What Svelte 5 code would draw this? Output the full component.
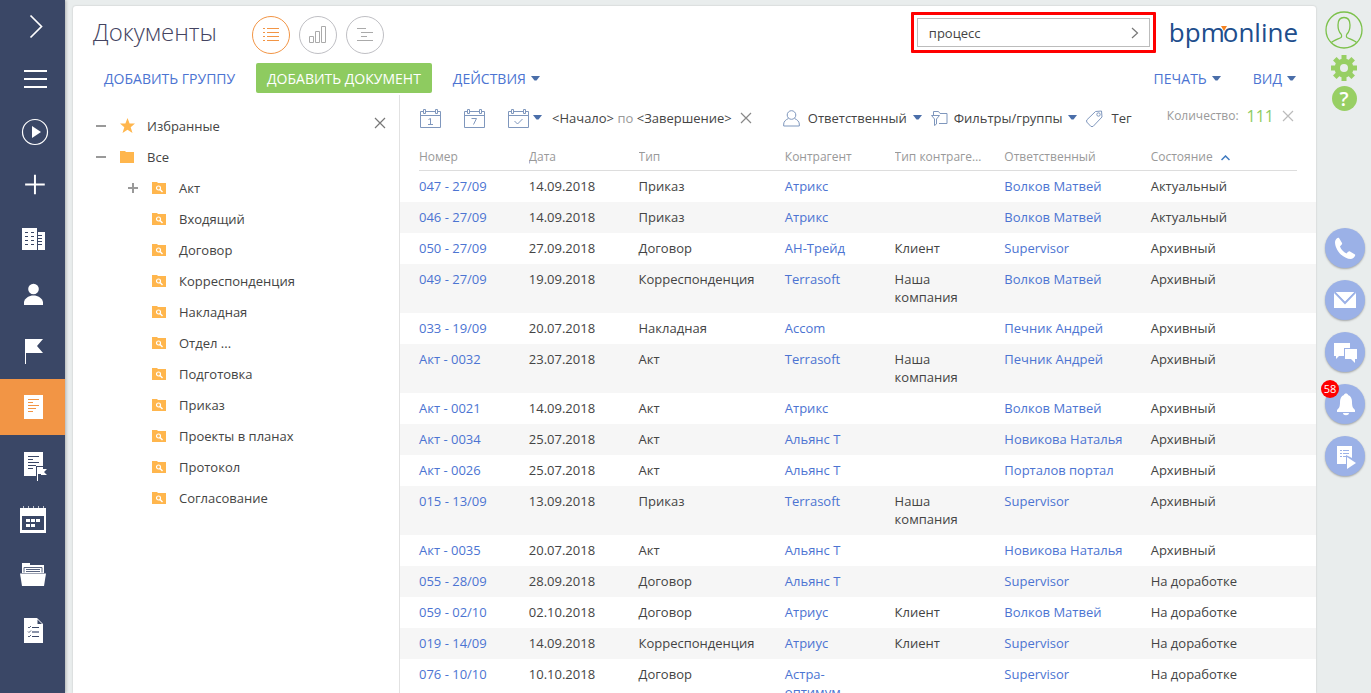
<script lang="ts">
	type Doc = {
		num: string;
		date: string;
		type: string;
		account: string;
		accountType: string;
		owner: string;
		state: string;
	};

	const folders = [
		'Акт',
		'Входящий',
		'Договор',
		'Корреспонденция',
		'Накладная',
		'Отдел ...',
		'Подготовка',
		'Приказ',
		'Проекты в планах',
		'Протокол',
		'Согласование'
	];

	const columns = ['Номер', 'Дата', 'Тип', 'Контрагент', 'Тип контрагента', 'Ответственный', 'Состояние'];

	const rows: string[][] = [
		['047 - 27/09', '14.09.2018', 'Приказ', 'Атрикс', '', 'Волков Матвей', 'Актуальный'],
		['046 - 27/09', '14.09.2018', 'Приказ', 'Атрикс', '', 'Волков Матвей', 'Актуальный'],
		['050 - 27/09', '27.09.2018', 'Договор', 'АН-Трейд', 'Клиент', 'Supervisor', 'Архивный'],
		['049 - 27/09', '19.09.2018', 'Корреспонденция', 'Terrasoft', 'Наша компания', 'Волков Матвей', 'Архивный'],
		['033 - 19/09', '20.07.2018', 'Накладная', 'Accom', '', 'Печник Андрей', 'Архивный'],
		['Акт - 0032', '23.07.2018', 'Акт', 'Terrasoft', 'Наша компания', 'Печник Андрей', 'Архивный'],
		['Акт - 0021', '14.09.2018', 'Акт', 'Атрикс', '', 'Волков Матвей', 'Архивный'],
		['Акт - 0034', '25.07.2018', 'Акт', 'Альянс Т', '', 'Новикова Наталья', 'Архивный'],
		['Акт - 0026', '25.07.2018', 'Акт', 'Альянс Т', '', 'Порталов портал', 'Архивный'],
		['015 - 13/09', '13.09.2018', 'Приказ', 'Terrasoft', 'Наша компания', 'Supervisor', 'Архивный'],
		['Акт - 0035', '20.07.2018', 'Акт', 'Альянс Т', '', 'Новикова Наталья', 'Архивный'],
		['055 - 28/09', '28.09.2018', 'Договор', 'Альянс Т', '', 'Supervisor', 'На доработке'],
		['059 - 02/10', '02.10.2018', 'Договор', 'Атриус', 'Клиент', 'Волков Матвей', 'На доработке'],
		['019 - 14/09', '14.09.2018', 'Корреспонденция', 'Атриус', 'Клиент', 'Supervisor', 'На доработке'],
		['076 - 10/10', '10.10.2018', 'Договор', 'Астра-оптимум', '', 'Supervisor', 'На доработке']
	];

	const docs: Doc[] = rows.map(([num, date, type, account, accountType, owner, state]) => ({
		num,
		date,
		type,
		account,
		accountType,
		owner,
		state
	}));

	let search = $state('процесс');
</script>

{#snippet caret()}
	<svg class="caret" width="9" height="5" viewBox="0 0 9 5"><path d="M0 0h9L5.500 4.500h-2z" fill="#4a6ea9" /></svg>
{/snippet}

{#snippet cross()}
	<svg width="12" height="12" viewBox="0 0 12 12"><path d="M1 1l10 10M11 1L1 11" fill="none" stroke="currentColor" stroke-width="1.2" /></svg>
{/snippet}

{#snippet calendar()}
	<path d="M.5 3.500h2.500M6 3.500h9M18 3.500h2.500v16H.5v-16M.5 7.500h20M3.500 1.500h2v4h-2zM15.500 1.500h2v4h-2z" />
{/snippet}

<div class="app">
	<nav class="rail" aria-label="Разделы">
		<button class="short" aria-label="Развернуть">
			<svg viewBox="0 0 65 53"><path d="M30.500 15.500l11 11-11 11" fill="none" stroke="#fff" stroke-width="1.700" /></svg>
		</button>
		<button class="short" aria-label="Меню">
			<svg viewBox="0 0 65 53"><path d="M24 17h23v2H24zM24 25h23v2H24zM24 33h23v2H24z" fill="#fff" /></svg>
		</button>
		<button class="short" aria-label="Запустить процесс">
			<svg viewBox="0 0 65 53">
				<circle cx="35" cy="26" r="12.500" fill="none" stroke="#fff" stroke-width="1.200" />
				<path d="M32 20l9 6-9 6z" fill="#fff" />
			</svg>
		</button>
		<button class="short" aria-label="Добавить">
			<svg viewBox="0 0 65 53"><path d="M34 16h2v20h-2zM25 25h20v2H25z" fill="#fff" /></svg>
		</button>
		<button aria-label="Контрагенты">
			<svg viewBox="0 0 65 56">
				<path d="M22 17h15v22H22zM38 21h7v18h-7z" fill="#fff" />
				<path d="M25 21h3v1h-3zM31 21h3v1h-3zM25 25h3v1h-3zM31 25h3v1h-3zM25 29h3v1h-3zM31 29h3v1h-3zM25 33h3v1h-3zM31 33h3v1h-3zM38 24h4v1h-4zM38 27h4v1h-4zM38 30h4v1h-4zM38 33h4v1h-4z" fill="#3a4766" />
			</svg>
		</button>
		<button aria-label="Контакты">
			<svg viewBox="0 0 65 56">
				<circle cx="33.500" cy="22" r="5.300" fill="#fff" />
				<path d="M24 38v-3c1-4 5-6.500 9.500-6.500S42 31 43 35v3z" fill="#fff" />
			</svg>
		</button>
		<button aria-label="Активности">
			<svg viewBox="0 0 65 56"><path d="M25 16h18l-6 7 6 7H26v11h-1z" fill="#fff" /></svg>
		</button>
		<button class="active" aria-label="Документы">
			<svg viewBox="0 0 65 56">
				<path d="M24 16h19v24H24z" fill="#fff" />
				<path d="M28 20h11v1H28zM28 23h5v1h-5zM28 26h11v1H28zM28 29h8v1h-8zM28 32h5v1h-5z" fill="#f29545" />
			</svg>
		</button>
		<button aria-label="Договоры">
			<svg viewBox="0 0 65 56">
				<path d="M24 17h19v14h-7v10H24z" fill="#fff" />
				<path d="M28 21h11v1H28zM28 24h5v1h-5zM28 27h11v1H28zM28 30h8v1h-8zM28 33h5v1h-5z" fill="#3a4766" />
				<path d="M37 32h6v2h4l-3 3 3 3h-6v-1h-3v7h-1z" fill="#fff" />
			</svg>
		</button>
		<button aria-label="Календарь">
			<svg viewBox="0 0 65 56">
				<path d="M20 17h26v25H20z" fill="#fff" />
				<path d="M23 15h1v2h-1zM28 15h1v2h-1zM33 15h1v2h-1zM38 15h1v2h-1zM43 15h1v2h-1z" fill="#c4c8d1" />
				<path d="M22 25h22v14H22z" fill="#3a4766" />
				<path d="M26 28h4v3h-4zM31 28h4v3h-4zM36 28h4v3h-4zM26 33h4v3h-4zM31 33h4v3h-4z" fill="#fff" />
			</svg>
		</button>
		<button aria-label="Проекты">
			<svg viewBox="0 0 65 56">
				<path d="M22 16h8v2h14v8H22z" fill="#fff" />
				<path d="M24 20.500h18v5M24 20.500v5M26 22.500h14M26 24.500h14" fill="none" stroke="#59647f" />
				<path d="M20 26.500h26l-2 12.500H22z" fill="#fff" />
			</svg>
		</button>
		<button aria-label="Задачи">
			<svg viewBox="0 0 65 56">
				<path d="M24 15h13l6 6v19H24z" fill="#fff" />
				<path d="M37.500 16.500l4.500 4.500h-4.500z" fill="#3a4766" />
				<path d="M32 24h7v1h-7zM32 33h7v1h-7z" fill="#3a4766" />
				<path d="M32 28h7v2h-7z" fill="#8a93a8" />
				<path d="M28 24l1 1 2-2M28 28.500l1 1 2-2M28 33l1 1 2-2" fill="none" stroke="#59647f" />
			</svg>
		</button>
	</nav>

	<main>
		<header class="title-row">
			<h1>Документы</h1>
			<div class="views">
				<button class="selected" aria-label="Список">
					<svg viewBox="0 0 36 36"><path d="M10 11.500h2M14 11.500h12M10 15.500h2M14 15.500h12M10 19.500h2M14 19.500h12M10 23.500h2M14 23.500h12" /></svg>
				</button>
				<button aria-label="Аналитика">
					<svg viewBox="0 0 36 36"><path d="M9.500 19.500h4v6h-4zM15.500 14.500h4v11h-4zM21.500 9.500h4v16h-4z" /></svg>
				</button>
				<button aria-label="Хронология">
					<svg viewBox="0 0 36 36"><path d="M10 11.500h9M14 15.500h12M14 19.500h6M10 23.500h16" /></svg>
				</button>
			</div>
			<div class="highlight">
				<form class="search">
					<input type="text" aria-label="Поиск" bind:value={search} />
					<button type="button" aria-label="Выполнить">
						<svg width="8" height="12" viewBox="0 0 8 12"><path d="M1 1l5.500 5L1 11" fill="none" stroke="#777" stroke-width="1.200" /></svg>
					</button>
				</form>
			</div>
			<a class="logo" href="#home">bpm<svg width="6" height="5" viewBox="0 0 6 5"><path d="M0 0h6L3 5z" fill="#f58220" /></svg>online</a>
		</header>

		<div class="actions">
			<button class="add-group">ДОБАВИТЬ ГРУППУ</button>
			<button class="primary">ДОБАВИТЬ ДОКУМЕНТ</button>
			<button class="menu">ДЕЙСТВИЯ {@render caret()}</button>
			<div class="actions-end">
				<button class="menu">ПЕЧАТЬ {@render caret()}</button>
				<button class="menu">ВИД {@render caret()}</button>
			</div>
		</div>

		<div class="body">
			<aside>
				<button class="close" aria-label="Закрыть">{@render cross()}</button>
				<ul>
					<li>
						<svg class="toggle" viewBox="0 0 10 10"><path d="M0 4h10v2H0z" /></svg>
						<svg class="mark" viewBox="0 0 16 16"><path d="M7.500 0l2.100 5.500H15l-4.300 3.700L12.500 15l-5-3.300-5 3.300 1.800-5.800L0 5.500h5.400z" /></svg>
						<span>Избранные</span>
					</li>
					<li>
						<svg class="toggle" viewBox="0 0 10 10"><path d="M0 4h10v2H0z" /></svg>
						<svg class="mark" viewBox="0 0 16 16"><path d="M0 2h5l1 1h8v11H0z" /></svg>
						<span>Все</span>
					</li>
					{#each folders as folder, i}
						<li class="child">
							<svg class="toggle" viewBox="0 0 10 10">
								{#if i === 0}<path d="M0 4h10v2H0zM4 0h2v10H4z" />{/if}
							</svg>
							<svg class="mark" viewBox="0 0 16 16">
								<path d="M0 2h5l1 1h8v11H0z" />
								<circle cx="6.500" cy="8" r="2" fill="none" stroke="#fff" stroke-width="1.200" />
								<path d="M8 9.500l2.500 2.500" stroke="#fff" stroke-width="1.400" />
							</svg>
							<span>{folder}</span>
						</li>
					{/each}
				</ul>
			</aside>

			<section class="content">
				<div class="filters">
					<button class="period" aria-label="День">
						<svg class="cal" viewBox="0 0 21 21">{@render calendar()}<path d="M8.500 11.500l2-1v6M8 16.500h5" /></svg>
					</button>
					<button class="period" aria-label="Неделя">
						<svg class="cal" viewBox="0 0 21 21">{@render calendar()}<path d="M7.500 10.500h5l-3 6" /></svg>
					</button>
					<button class="period custom" aria-label="Период">
						<svg class="cal" viewBox="0 0 21 21">{@render calendar()}<path d="M6.500 13l3 3 5-5" /></svg>
						{@render caret()}
					</button>
					<div class="range">
						<a href="#start">&lt;Начало&gt;</a> <span>по</span> <a href="#end">&lt;Завершение&gt;</a>
					</div>
					<button class="clear" aria-label="Очистить период">{@render cross()}</button>
					<button class="owner">
						<svg viewBox="0 0 17 17"><circle cx="8.500" cy="5" r="4.300" /><path d="M5.500 8.500C3 9.500.7 11.500.7 14v2h15.600v-2c0-2.500-2.300-4.500-4.800-5.500" /></svg>
						<span>Ответственный</span>
						{@render caret()}
					</button>
					<button class="groups">
						<svg viewBox="0 0 17 17"><path d="M2.500 5V1.500h5l1.500 2h7v10H8M.5 5.500h8L5.500 9v5l-2 1.500V9z" /></svg>
						<span>Фильтры/группы</span>
						{@render caret()}
					</button>
					<button class="tag">
						<svg viewBox="0 0 17 17"><path d="M9.500 1.500l6-.5.5 6-9 9.500H5L.7 12v-2z" /><circle cx="12.500" cy="4.500" r="1.700" /></svg>
						<span>Тег</span>
					</button>
					<div class="count">
						<span>Количество:</span>
						<strong>111</strong>
						<button aria-label="Скрыть количество">{@render cross()}</button>
					</div>
				</div>

				<table>
					<colgroup>
						<col class="narrow" /><col class="narrow" /><col class="wide" /><col class="narrow" /><col class="narrow" /><col class="wide" /><col class="wide" />
					</colgroup>
					<thead>
						<tr>
							{#each columns as column, i}
								<th scope="col">
									{column}
									{#if i === 6}
										<svg class="sort" width="9" height="6" viewBox="0 0 9 6"><path d="M.5 5l4-4 4 4" fill="none" stroke="#3f7ac0" stroke-width="1.500" /></svg>
									{/if}
								</th>
							{/each}
						</tr>
					</thead>
					<tbody>
						{#each docs as doc}
							<tr>
								<td><a href="#doc">{doc.num}</a></td>
								<td>{doc.date}</td>
								<td>{doc.type}</td>
								<td><a href="#account">{doc.account}</a></td>
								<td>{doc.accountType}</td>
								<td><a href="#owner">{doc.owner}</a></td>
								<td>{doc.state}</td>
							</tr>
						{/each}
					</tbody>
				</table>
			</section>
		</div>
	</main>

	<div class="side">
		<button class="profile" aria-label="Профиль">
			<svg width="38" height="38" viewBox="0 0 38 38" fill="none" stroke="#7cc14b" stroke-width="1.300">
				<circle cx="19" cy="19" r="18" />
				<path d="M6.500 31.500c2-2 7-3.500 9.500-5 .8-.6.7-2.500 0-3.500-2-2-3-5-3-9 0-5 2.500-7.500 6-7.500s6 2.500 6 7.500c0 4-1 7-3 9-.7 1-.8 2.900 0 3.500 2.500 1.500 7.500 3 9.500 5" />
			</svg>
		</button>
		<button class="small" aria-label="Настройки">
			<svg width="26" height="26" viewBox="0 0 26 26">
				<g fill="#98cf64">
					<circle cx="13" cy="13" r="9.500" />
					<path d="M10.500 0h5v26h-5zM0 10.500h26v5H0z" />
					<path d="M10.500 0h5v26h-5zM0 10.500h26v5H0z" transform="rotate(45 13 13)" />
				</g>
				<circle cx="13" cy="13" r="4" fill="#e9eded" />
			</svg>
		</button>
		<button class="small help" aria-label="Справка">?</button>

		<div class="comm">
			<button aria-label="Звонки">
				<svg viewBox="0 0 40 40"><path d="M14 10l3 5c.5 1-.5 2-2 3.500 1 3 3.500 5.500 6.500 7 1.500-1.500 2.500-2.500 3.500-2l5 3c1 1-1.500 4.500-4 4.500C18 31 10 22 10 14c0-2.500 3-5 4-4z" /></svg>
			</button>
			<button aria-label="Почта">
				<svg viewBox="0 0 40 40"><path d="M9 12h22v16H9z" /><path d="M9.500 12l10.500 11 10.500-11" fill="none" stroke="#9bb1e7" stroke-width="2" /><path d="M11 12h18l-9 9z" /></svg>
			</button>
			<button aria-label="Лента">
				<svg viewBox="0 0 40 40"><path d="M9 11h16v5h-6v8h-5l-3 3v-3H9z" /><path d="M20 17h12v10h-2v4l-4-4h-6z" /></svg>
			</button>
			<button aria-label="Уведомления">
				<svg viewBox="0 0 40 40"><path d="M19 11c0-2 4-2 4 0 3 1 4 4 4 7 0 5 1 6 3 8v2H12v-2c2-2 3-3 3-8 0-3 1-6 4-7zM18 29h6c0 3-6 3-6 0z" /></svg>
				<span class="badge">58</span>
			</button>
			<button aria-label="Бизнес-процессы">
				<svg viewBox="0 0 40 40">
					<path d="M12 10h15v12l-6-3v9h-9z" />
					<path d="M15 14.500h2M18 14.500h6M15 17.500h2M18 17.500h6M15 20.500h2M18 20.500h3" stroke="#9bb1e7" />
					<path d="M22 21l9 6-9 6z" />
				</svg>
			</button>
		</div>
	</div>
</div>

<style>
	:global(body) {
		background: #e9eded;
	}

	.app {
		display: flex;
		height: 100vh;
		overflow: hidden;
		font-family: 'Open Sans', 'Noto Sans', sans-serif;
		font-size: 13px;
		line-height: 18px;
		color: #444;
	}

	button {
		display: flex;
		align-items: center;
		padding: 0;
		border: 0;
		background: none;
		color: inherit;
		font: inherit;
		white-space: nowrap;
		cursor: pointer;
	}

	a {
		color: #4c74d2;
		text-decoration: none;
	}

	svg {
		flex: none;
	}

	.rail {
		flex: none;
		width: 65px;
		background: #3a4766;
		box-shadow: 1px 0 3px rgba(0, 0, 0, 0.25);
	}

	.rail button {
		width: 100%;
		height: 56px;
	}

	.rail .short {
		height: 53px;
	}

	.rail .short:nth-child(4) {
		height: 52px;
	}

	.rail .active {
		background: #f29545;
	}

	.rail svg {
		width: 65px;
		height: 100%;
	}

	main {
		flex: 1;
		display: flex;
		flex-direction: column;
		min-width: 0;
		margin: 6px 0 0 8px;
		border-radius: 3px 3px 0 0;
		background: #fff;
		box-shadow: 0 0 2px rgba(0, 0, 0, 0.2);
	}

	.title-row {
		display: flex;
		align-items: flex-start;
		box-sizing: border-box;
		height: 57px;
		padding: 6px 18px 0 20px;
	}

	h1 {
		width: 159px;
		margin: 4px 0 0;
		font-size: 24px;
		font-weight: 300;
		line-height: 32px;
		color: #444461;
	}

	.views {
		display: flex;
		gap: 9px;
		margin: 4px auto 0 0;
	}

	.views button {
		width: 38px;
		height: 38px;
		border: 1px solid #bfbfc4;
		border-radius: 50%;
	}

	.views .selected {
		border-color: #f29545;
	}

	.views svg {
		width: 36px;
		height: 36px;
		fill: none;
		stroke: #aaa;
	}

	.views .selected svg {
		stroke: #f29545;
	}

	.highlight {
		width: 233px;
		margin-right: 13px;
		padding: 3px;
		border: 3px solid #f00;
		border-radius: 1px;
	}

	.search {
		display: flex;
		height: 27px;
		margin: 0;
		border: 1px solid #bcbcbc;
	}

	.search input {
		flex: 1;
		min-width: 0;
		padding: 0 11px;
		border: 0;
		outline: 0;
		background: none;
		color: #444;
		font: inherit;
	}

	.search button {
		padding: 0 10px;
	}

	.logo {
		margin-top: 4px;
		font-size: 26px;
		line-height: 32px;
		color: #204d8c;
	}

	.logo svg {
		margin: 0 -4px 11px;
	}

	.actions {
		display: flex;
		height: 30px;
		padding: 0 20px 0 31px;
		font-size: 14px;
		color: #4c74d2;
	}

	.actions button {
		padding-top: 2px;
	}

	.add-group {
		width: 152px;
	}

	.actions .primary {
		padding: 2px 11px 0;
		border-radius: 2px;
		background: #8ecb60;
		color: #fff;
	}

	.menu {
		gap: 5px;
	}

	.primary + .menu {
		margin-left: 21px;
	}

	.actions-end {
		display: flex;
		gap: 32px;
		margin-left: auto;
	}

	.caret {
		margin-bottom: 2px;
	}

	.body {
		flex: 1;
		display: flex;
		min-height: 0;
		padding-top: 2px;
	}

	aside {
		position: relative;
		flex: none;
		box-sizing: border-box;
		width: 327px;
		border-right: 1px solid #e2e2e2;
	}

	.close {
		position: absolute;
		top: 22px;
		right: 13px;
		color: #777;
	}

	ul {
		margin: 0;
		padding: 15px 0 0 23px;
		list-style: none;
	}

	li {
		display: flex;
		align-items: center;
		height: 31px;
	}

	.child {
		padding-left: 32px;
	}

	.toggle {
		width: 10px;
		height: 10px;
		margin-right: 14px;
		fill: #999;
	}

	.mark {
		width: 16px;
		height: 16px;
		margin-right: 11px;
		fill: #ffb64d;
	}

	.content {
		flex: 1;
		min-width: 0;
		padding: 0 19px;
	}

	.filters {
		display: flex;
		align-items: center;
		box-sizing: border-box;
		height: 48px;
		padding: 0 3px 2px 1px;
	}

	.filters svg {
		fill: none;
		stroke: #7f97bd;
	}

	.filters .caret {
		stroke: none;
	}

	.filters .cal {
		width: 21px;
		height: 21px;
	}

	.period {
		margin-right: 23px;
	}

	.custom {
		gap: 4px;
		margin-right: 10px;
	}

	.range {
		white-space: nowrap;
		color: #999;
	}

	.range a {
		color: #444;
	}

	.clear {
		margin: 0 31px 0 8px;
		color: #888;
	}

	.owner,
	.groups,
	.tag {
		gap: 6px;
		margin-right: 9px;
	}

	.owner svg:not(.caret),
	.groups svg:not(.caret),
	.tag svg {
		width: 17px;
		height: 17px;
	}

	.owner svg:not(.caret),
	.tag svg {
		margin-right: 2px;
	}

	.count {
		display: flex;
		align-items: center;
		gap: 8px;
		margin: 0 0 4px auto;
		font-size: 12px;
		color: #999;
	}

	.count strong {
		font-size: 16px;
		font-weight: 400;
		color: #8ecb60;
	}

	.count button {
		color: #bbb;
	}

	table {
		width: 100%;
		table-layout: fixed;
		border-spacing: 0;
	}

	.narrow {
		width: 12.5%;
	}

	.wide {
		width: 16.66%;
	}

	th {
		padding: 5px 22px 4px 0;
		border-bottom: 1px solid #ddd;
		overflow: hidden;
		font-size: 12px;
		font-weight: 400;
		text-align: left;
		text-overflow: ellipsis;
		white-space: nowrap;
		color: #999;
	}

	.sort {
		margin-left: 5px;
	}

	td {
		padding: 6px 22px 7px 0;
		vertical-align: top;
	}

	tbody tr:nth-child(even) {
		background: #f6f6f6;
		box-shadow: -19px 0 #f6f6f6, 19px 0 #f6f6f6;
	}

	.side {
		flex: none;
		display: flex;
		flex-direction: column;
		align-items: center;
		box-sizing: border-box;
		width: 55px;
		padding: 11px 0 0 1px;
	}

	.small {
		margin-top: 6px;
	}

	.help {
		justify-content: center;
		width: 25px;
		height: 25px;
		margin-top: 5px;
		border-radius: 50%;
		background: #98cf64;
		color: #fff;
		font-size: 20px;
		font-weight: 600;
	}

	.comm {
		display: flex;
		flex-direction: column;
		gap: 12px;
		margin: 117px 0 0 2px;
	}

	.comm button {
		position: relative;
		width: 40px;
		height: 40px;
		border-radius: 50%;
		background: #9bb1e7;
		box-shadow: 0 1px 2px rgba(0, 0, 0, 0.3);
	}

	.comm svg {
		width: 40px;
		height: 40px;
		fill: #fff;
	}

	.badge {
		position: absolute;
		top: -4px;
		left: -4px;
		width: 18px;
		border-radius: 50%;
		background: #f00;
		color: #fff;
		font-size: 11px;
		line-height: 18px;
		text-align: center;
	}
</style>
